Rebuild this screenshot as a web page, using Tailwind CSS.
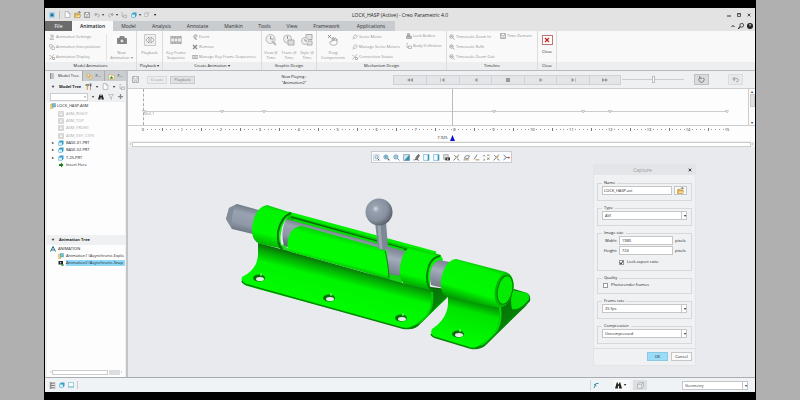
<!DOCTYPE html>
<html lang="en">

<head>
    <meta charset="utf-8">
    <title>LOCK_HASP (Active) - Creo Parametric 4.0</title>
    <script src="https://cdn.jsdelivr.net/npm/@tailwindcss/browser@4"></script>
</head>

<body class="bg-[#b0b0b0] font-['Open_Sans','Noto_Sans',sans-serif] text-[4px] leading-[6px] text-[#333]">
    <!-- icon set -->
    <svg class="hidden">
        <symbol id="i-cam" viewBox="0 0 12 12"><path d="M1 4h2l1-2h4l1 2h2v6H1z" fill="#8a8a8a" /><circle cx="6" cy="7" r="2.2" fill="#ddd" stroke="#666" /></symbol>
        <symbol id="i-person" viewBox="0 0 12 12"><path d="M2 2h6v2H4v2h5M3 11c0-4 6-4 6 0M2 8v3h8" fill="none" stroke="#aaa" stroke-width="1.3" /><circle cx="8" cy="5" r="1.5" fill="#bbb" /></symbol>
        <symbol id="i-interp" viewBox="0 0 12 12"><path d="M1 1h5v5H1zM6 6h5v5H6zM2 8l3 3M7 2l3 3" fill="none" stroke="#aaa" stroke-width="1.3" /></symbol>
        <symbol id="i-disp" viewBox="0 0 12 12"><path d="M1 11L10 1M1 2l3 3M7 7h4v4H7z" fill="none" stroke="#999" stroke-width="1.5" /></symbol>
        <symbol id="i-playback" viewBox="0 0 12 12"><path d="M.5.5h11v11H.5z" fill="#eee" stroke="#ccc" /><path d="M5 3v6L2 6zM7 3v6l3-3z" fill="#fff" stroke="#888" stroke-width=".7" /></symbol>
        <symbol id="i-film" viewBox="0 0 14 10"><path d="M0 0h14v10H0z" fill="#a4a4a4" /><path d="M1 3h3.5v4H1zM5.3 3h3.5v4H5.3zM9.6 3h3.5v4H9.600z" fill="#eee" /><path d="M1 1.4h12M1 8.6h12" stroke="#eee" stroke-dasharray="1 1" /></symbol>
        <symbol id="i-event" viewBox="0 0 12 12"><circle cx="7" cy="4" r="3" fill="none" stroke="#999" stroke-width="1.3" /><path d="M7 2v2h2M2 6h3v3h4M6 11h4" fill="none" stroke="#999" stroke-width="1.3" /></symbol>
        <symbol id="i-x" viewBox="0 0 12 12"><path d="M2 2l8 8M10 2l-8 8" stroke="currentColor" stroke-width="2.6" /></symbol>
        <symbol id="i-clock" viewBox="0 0 12 12"><circle cx="5.5" cy="5" r="4.5" fill="#eee" stroke="#bbb" /><path d="M5.5 2v3h3" fill="none" stroke="#999" /><path d="M7 7l4 4" stroke="#bbb" stroke-width="2" /></symbol>
        <symbol id="i-clock2" viewBox="0 0 12 12"><circle cx="4.5" cy="5" r="4" fill="#eee" stroke="#bbb" /><path d="M5 6h6v5H5z" fill="#ddd" stroke="#aaa" /><path d="M4.5 2v3" stroke="#999" /></symbol>
        <symbol id="i-clock3" viewBox="0 0 12 12"><path d="M5 .5h6v5H5zM6 7h5v4H6z" fill="#e4e4e4" stroke="#aaa" /><circle cx="4" cy="7" r="3.5" fill="#eee" stroke="#bbb" /><path d="M4 5v2h2" fill="none" stroke="#999" /></symbol>
        <symbol id="i-hand" viewBox="0 0 12 12"><path d="M4 11L2.5 8l1-.5L5 8V4h1v3-3.5h1V7l1-3h1v3l1-2v4L9 11z" fill="#fff" stroke="#999" stroke-width=".7" /><path d="M1 1l3 3M4 1L1 4" stroke="#777" stroke-width=".8" /></symbol>
        <symbol id="i-motor" viewBox="0 0 12 12"><path d="M3 8c-2-3 3-8 6-6s0 7-3 7zM1 11l4-4M6 3l3 3" fill="none" stroke="#aaa" stroke-width="1.3" /></symbol>
        <symbol id="i-body" viewBox="0 0 12 12"><path d="M3 1h4v5H3zM1 6h10v5H1z" fill="#bbb" stroke="#8a8a8a" /></symbol>
        <symbol id="i-def" viewBox="0 0 12 12"><path d="M1 1h3M2 3v6h3M5 6h6v5H5z" fill="none" stroke="#aaa" stroke-width="1.5" /></symbol>
        <symbol id="i-zoom" viewBox="0 0 12 12"><circle cx="5" cy="5" r="3.5" fill="#e9f4f8" stroke="currentColor" stroke-width="1.3" /><path d="M8 8l3 3M3 5h4" stroke="currentColor" stroke-width="1.5" /></symbol>
        <symbol id="i-zoomin" viewBox="0 0 12 12"><circle cx="5" cy="5" r="3.5" fill="#e9f4f8" stroke="currentColor" stroke-width="1.3" /><path d="M8 8l3 3" stroke="#555" stroke-width="1.8" /><path d="M3 5h4M5 3v4" stroke="currentColor" stroke-width="1.5" /></symbol>
        <symbol id="i-refit" viewBox="0 0 12 12"><path d="M1 1h9v10H1z" fill="#fff" stroke="#aab" stroke-width=".8" /><circle cx="6" cy="5.500" r="2.800" fill="#d8eef5" stroke="currentColor" /><path d="M8 8l3 3" stroke="#555" stroke-width="1.600" /></symbol>
        <symbol id="i-save" viewBox="0 0 12 12"><path d="M1 1h10v10H1z" fill="#eee" stroke="currentColor" stroke-width="1.3" /><path d="M3 1h6v4H3zM4 8h4v3H4z" fill="#fff" stroke="currentColor" /></symbol>
        <symbol id="i-folder" viewBox="0 0 12 12"><path d="M1 4h4l1 1h4v6H1z" fill="#e8b84c" stroke="#a87c26" stroke-width=".8" /><path d="M3 7h9l-2 4H1z" fill="#ffe49b" stroke="#a87c26" stroke-width=".7" /><path d="M6 3c1-2 3-2 4 0M9 0l2 3H8" fill="none" stroke="#555" /></symbol>
        <symbol id="i-layers" viewBox="0 0 12 12"><path d="M1 2l4-1 2 4-4 2zM5 6l4-1 2 4-4 2z" fill="#fbe6a8" stroke="#c8963a" stroke-width=".9" /></symbol>
        <symbol id="i-fav" viewBox="0 0 12 12"><path d="M1 3h4l1 1h5v7H1z" fill="#fff6d8" stroke="#c8a03a" stroke-width=".9" /><path d="M6 5l1 2 2 .3-1.500 1.200.5 2L6 9.400 4 10.500l.5-2L3 7.300 5 7z" fill="#2b8a5a" /></symbol>
        <symbol id="i-new" viewBox="0 0 12 12"><path d="M2 1h5l3 3v7H2z" fill="#fff" stroke="#888" stroke-width=".9" /><path d="M7 1v3h3" fill="none" stroke="#888" stroke-width=".8" /></symbol>
        <symbol id="i-undo" viewBox="0 0 12 12"><path d="M1 5l3-3v6zM4 5c8-3 9 5 3 5" fill="none" stroke="#888" stroke-width="1.2" /></symbol>
        <symbol id="i-redo" viewBox="0 0 12 12"><path d="M11 5L8 2v6zM8 5C0 2-1 10 5 10" fill="none" stroke="#888" stroke-width="1.2" /></symbol>
        <symbol id="i-plane" viewBox="0 0 12 12"><path d="M1 1h10v10H1z" fill="#e8e8e8" stroke="#bbb" /><path d="M3 4h6v5H3z" fill="#f8f8f8" stroke="#bbb" /></symbol>
        <symbol id="i-box" viewBox="0 0 12 12"><path d="M1 4l3-3h7v7l-3 3H1zM1 4h7v7M8 4l3-3" fill="#ececec" stroke="#999" /></symbol>
        <symbol id="i-part" viewBox="0 0 12 12"><path d="M1 4l3-3h7v7l-3 3H1z" fill="#3a9cc8" /><path d="M2 5h6v5H2z" fill="#c9f1fb" /></symbol>
        <symbol id="i-asm" viewBox="0 0 12 12"><path d="M1 2h5v9H1z" fill="#f0d070" stroke="#b8923c" stroke-width=".7" /><path d="M5 1h6v7H5z" fill="#6fc0dc" stroke="#2b7f9e" stroke-width=".7" /></symbol>
        <symbol id="i-tree" viewBox="0 0 12 12"><path d="M3 0v12M3 2h7M3 6h7M3 10h7" fill="none" stroke="#666" stroke-width="1.3" /></symbol>
        <symbol id="i-tools" viewBox="0 0 12 12"><path d="M1 2h6v3H1z" fill="#777" /><path d="M3 4h2v8H3z" fill="#d9a441" /><path d="M8 1h3v4l-1 1v6H9V6L8 5z" fill="#666" /></symbol>
        <symbol id="i-binoc" viewBox="0 0 12 12"><path d="M3 1h2v3h2V1h2l3 10H7V7H5v4H0z" fill="#222" /></symbol>
        <symbol id="i-funnel" viewBox="0 0 12 12"><path d="M1 1h10L7 6v5L5 9V6z" fill="none" stroke="#999" /></symbol>
        <symbol id="i-view" viewBox="0 0 12 12"><path d="M1 1h9v10H1z" fill="#f6fdff" stroke="#54a6c0" /><path d="M8 1h2.500v10H8z" fill="#2b98c0" /></symbol>
        <symbol id="i-view2" viewBox="0 0 12 12"><path d="M1 1h10v10H1z" fill="#cdecf4" stroke="#558" stroke-width=".8" /><path d="M11 1v10H2z" fill="#3b8fa9" /></symbol>
        <symbol id="i-screen" viewBox="0 0 12 12"><path d="M1 1h10v10H1z" fill="#f6fdff" stroke="#54a6c0" /><path d="M1 9h10" stroke="#54a6c0" /></symbol>
        <symbol id="i-shade" viewBox="0 0 12 12"><path d="M1 10c3 1 4-1 4-3s2-3 4-6l2 1c-1 4-3 5-4 7l3 2" fill="#888" stroke="#333" stroke-width="1.100" /></symbol>
        <symbol id="i-axis" viewBox="0 0 12 12"><path d="M1 11L10 1M2 2l3 3M7 8l4 3" fill="none" stroke="#555" stroke-width="1.3" /><circle cx="8" cy="5" r="1.500" fill="#d0a84c" /></symbol>
        <symbol id="i-line" viewBox="0 0 12 12"><path d="M2 9L7 1" stroke="#555" stroke-width="1.200" /><path d="M4 10h7" stroke="#a8823c" stroke-width="1.500" /></symbol>
        <symbol id="i-points" viewBox="0 0 12 12"><path d="M1 2l2 2M3 2L1 4M7 2h4M1 9l2 2M3 9l-2 2M7 6l4 4M7 10l4-4" stroke="#665a3a" stroke-width="1.200" /></symbol>
        <symbol id="i-datum" viewBox="0 0 12 12"><path d="M2 7l3-4h6L9 8zM1 10h6" fill="none" stroke="#666" stroke-width="1.2" /><path d="M7 9h3v2H7z" fill="#c9a35a" /></symbol>
        <symbol id="i-shot" viewBox="0 0 12 12"><path d="M1 1h8v8H1z" fill="#ddd" stroke="#888" /><path d="M4 6h8v5H4z" fill="#333" /><circle cx="8" cy="8.500" r="1.400" fill="#eee" /></symbol>
        <symbol id="i-snap" viewBox="0 0 12 12"><path d="M1 2h9v7H1z" fill="#222" /><circle cx="5" cy="5.500" r="1.500" fill="#ddd" /><path d="M7 8h4v4H7z" fill="#3a9a3a" /></symbol>
        <symbol id="i-spin" viewBox="0 0 12 12"><path d="M1 2l5 4-5 4" fill="none" stroke="#37789a" stroke-width="1.5" /><path d="M6 6h4" stroke="#c33" stroke-width="1.5" /><circle cx="10" cy="6" r="1.5" fill="#c33" /></symbol>
    </svg>

    <div class="mx-[5.5%] min-h-screen flex flex-col bg-black py-2 px-px">
        <div class="flex-1 flex flex-col bg-[#eff0f2]">
            <!-- title bar -->
            <header class="bg-[#e3e3e3]">
                <div class="grid grid-cols-[1fr_auto_1fr] items-center h-[13px] px-1">
                    <div class="flex items-center gap-[3px]">
                        <svg class="size-[6px]" viewBox="0 0 12 12"><path d="M0 0h12v12H0z" fill="#a9d3e6" /><path d="M3 3h6v6H3z" fill="#1f6f9c" /></svg>
                        <span class="w-px h-2 bg-[#bbb] mx-px"></span>
                        <button aria-label="New"><svg class="size-[7px]"><use href="#i-new" /></svg></button>
                        <button aria-label="Open"><svg class="size-[7px]"><use href="#i-folder" /></svg></button>
                        <button aria-label="Save" class="text-[#777]"><svg class="size-[6px]"><use href="#i-save" /></svg></button>
                        <button aria-label="Undo" class="flex items-center gap-[2px] ml-px"><svg class="size-[6px]"><use href="#i-undo" /></svg>▾</button>
                        <button aria-label="Redo" class="flex items-center gap-[2px] ml-px"><svg class="size-[6px]"><use href="#i-redo" /></svg>▾</button>
                        <button aria-label="Regenerate"><svg class="size-[6px]"><use href="#i-def" /></svg></button>
                        <button aria-label="Windows" class="flex items-center gap-[2px] ml-px"><svg class="size-[6px]"><use href="#i-part" /></svg>▾</button>
                        <button aria-label="Close window"><svg class="size-[5px]"><use href="#i-box" /></svg></button>
                        <button aria-label="Customize" class="ml-[2px] text-black">▾</button>
                    </div>
                    <h1 class="text-[5px] text-[#222]">LOCK_HASP (Active) - Creo Parametric 4.0</h1>
                    <div class="flex justify-end items-center gap-[6px] text-[#333]">
                        <button aria-label="Minimize"><svg class="size-1" viewBox="0 0 4 4"><path d="M0 3h4" stroke="#333" /></svg></button>
                        <button aria-label="Maximize"><svg class="size-1" viewBox="0 0 8 8"><path d="M1 1h6v6H1zM1 2h6" fill="none" stroke="#333" stroke-width="1.5" /></svg></button>
                        <button aria-label="Close"><svg class="size-1"><use href="#i-x" /></svg></button>
                    </div>
                </div>
                <div class="flex items-center h-[10px] text-[5px] text-[#333]">
                    <nav class="flex h-full bg-[#c9cccf] text-center">
                        <button class="w-[27px] bg-[#6b6b6b] text-white">File</button>
                        <button class="w-[41px] bg-[#f9f9fa] text-[#222] font-semibold">Animation</button>
                        <button class="w-[31px]">Model</button>
                        <button class="w-[35px]">Analysis</button>
                        <button class="w-[37px]">Annotate</button>
                        <button class="w-[35px]">Manikin</button>
                        <button class="w-[27px]">Tools</button>
                        <button class="w-[28px]">View</button>
                        <button class="w-[41px]">Framework</button>
                        <button class="w-[48px]">Applications</button>
                    </nav>
                    <div class="ml-auto flex items-center gap-[3px] pr-[2px] text-[#222]">
                        <svg class="size-1" viewBox="0 0 8 8"><path d="M1 6l3-3 3 3" fill="none" stroke="#222" stroke-width="2" /></svg>
                        <svg class="size-[6px]" viewBox="0 0 8 8"><circle cx="5" cy="3" r="2.5" fill="none" stroke="#222" /><path d="M3 5L0 8" stroke="#222" stroke-width="1.5" /></svg>
                        <button class="size-[6px] rounded-full bg-[#222] text-[4px] text-white font-bold">?</button>
                    </div>
                </div>
            </header>

            <!-- ribbon -->
            <div class="flex h-10 bg-[#f9f9fa] border-b border-[#b9bbbe] text-[#8f8f8f]">
                <section class="w-[92px] flex flex-col border-r border-[#dcdcdc]">
                    <div class="flex-1 flex items-center">
                        <div class="w-[62px] flex flex-col gap-1 pl-1 border-r border-[#e4e4e4] whitespace-nowrap">
                            <button class="flex items-center gap-px"><svg class="size-[6px]"><use href="#i-person" /></svg>Animation Settings</button>
                            <button class="flex items-center gap-px"><svg class="size-[6px]"><use href="#i-interp" /></svg>Animation Interpolation</button>
                            <button class="flex items-center gap-px"><svg class="size-[6px]"><use href="#i-disp" /></svg>Animation Display</button>
                        </div>
                        <button class="flex-1 flex flex-col items-center leading-[5px]"><svg class="size-3 mb-1"><use href="#i-cam" /></svg>New<br>Animation ▾</button>
                    </div>
                    <h2 class="h-2 leading-[8px] bg-[#eceef0] text-center text-[#222]">Model Animations</h2>
                </section>
                <section class="w-[26px] flex flex-col border-r border-[#dcdcdc]">
                    <button class="flex-1 flex flex-col items-center pt-[3px] leading-[5px]"><svg class="size-3 mb-1"><use href="#i-playback" /></svg>Playback</button>
                    <h2 class="h-2 leading-[8px] bg-[#eceef0] text-center text-[#222]">Playback ▾</h2>
                </section>
                <section class="w-[99px] flex flex-col border-r border-[#dcdcdc]">
                    <div class="flex-1 flex items-center">
                        <button class="w-[26px] flex flex-col items-center leading-[5px]"><svg class="w-3 h-2 mt-[2px] mb-[6px]"><use href="#i-film" /></svg>Key Frame<br>Sequence</button>
                        <div class="flex flex-col gap-1 pl-[3px] whitespace-nowrap">
                            <button class="flex items-center gap-px"><svg class="size-[6px]"><use href="#i-event" /></svg>Event</button>
                            <button class="flex items-center gap-px"><svg class="size-[6px] text-[#888]"><use href="#i-x" /></svg>Remove</button>
                            <button class="flex items-center gap-px"><svg class="w-[6px] h-1"><use href="#i-film" /></svg>Manage Key Frame Sequences</button>
                        </div>
                    </div>
                    <h2 class="h-2 leading-[8px] bg-[#eceef0] text-center text-[#222]">Create Animation ▾</h2>
                </section>
                <section class="w-[55px] flex flex-col border-r border-[#dcdcdc]">
                    <div class="flex-1 grid grid-cols-3 items-center leading-[5px]">
                        <button class="flex flex-col items-center"><svg class="size-3 mb-1"><use href="#i-clock" /></svg>View @<br>Time</button>
                        <button class="flex flex-col items-center"><svg class="size-3 mb-1"><use href="#i-clock2" /></svg>Trans @<br>Time</button>
                        <button class="flex flex-col items-center"><svg class="size-3 mb-1"><use href="#i-clock3" /></svg>Style @<br>Time</button>
                    </div>
                    <h2 class="h-2 leading-[8px] bg-[#eceef0] text-center text-[#222]">Graphic Design</h2>
                </section>
                <section class="w-[130px] flex flex-col border-r border-[#dcdcdc]">
                    <div class="flex-1 flex items-center whitespace-nowrap">
                        <button class="w-[32px] flex flex-col items-center leading-[5px]"><svg class="size-3 mb-1"><use href="#i-hand" /></svg>Drag<br>Components</button>
                        <div class="w-[54px] flex flex-col gap-1 pl-[3px]">
                            <button class="flex items-center gap-px"><svg class="size-[6px]"><use href="#i-motor" /></svg>Servo Motor</button>
                            <button class="flex items-center gap-px"><svg class="size-[6px]"><use href="#i-motor" /></svg>Manage Servo Motors</button>
                            <button class="flex items-center gap-px"><svg class="size-[6px]"><use href="#i-disp" /></svg>Connection Status</button>
                        </div>
                        <div class="self-start pt-[2px] flex flex-col gap-1 pl-[3px]">
                            <button class="flex items-center gap-px"><svg class="size-[6px]"><use href="#i-body" /></svg>Lock Bodies</button>
                            <button class="flex items-center gap-px"><svg class="size-[6px]"><use href="#i-def" /></svg>Body Definition</button>
                        </div>
                    </div>
                    <h2 class="h-2 leading-[8px] bg-[#eceef0] text-center text-[#222]">Mechanism Design</h2>
                </section>
                <section class="w-[91px] flex flex-col border-r border-[#dcdcdc]">
                    <div class="flex-1 flex items-center whitespace-nowrap">
                        <div class="w-[51px] flex flex-col gap-1 pl-[2px]">
                            <button class="flex items-center gap-px"><svg class="size-[6px]"><use href="#i-zoom" /></svg>Timescale Zoom In</button>
                            <button class="flex items-center gap-px"><svg class="size-[6px]"><use href="#i-zoom" /></svg>Timescale Refit</button>
                            <button class="flex items-center gap-px"><svg class="size-[6px]"><use href="#i-zoom" /></svg>Timescale Zoom Out</button>
                        </div>
                        <button class="self-start pt-[2px] pl-[2px] flex items-center gap-px"><svg class="size-[6px]"><use href="#i-save" /></svg>Time Domain</button>
                    </div>
                    <h2 class="h-2 leading-[8px] bg-[#eceef0] text-center text-[#222]">Timeline</h2>
                </section>
                <section class="w-[19px] flex flex-col border-r border-[#dcdcdc] text-[#222]">
                    <button class="flex-1 flex flex-col items-center pt-1 leading-[5px]"><span class="w-[11px] h-[10px] mb-1 flex items-center justify-center border border-[#b77] bg-white text-[#c22]"><svg class="size-[6px]"><use href="#i-x" /></svg></span>Close</button>
                    <h2 class="h-2 leading-[8px] bg-[#eceef0] text-center">Close</h2>
                </section>
                <div class="flex-1 flex flex-col justify-end"><div class="h-2 bg-[#eceef0]"></div></div>
            </div>

            <div class="flex-1 flex">
                <!-- left panel -->
                <aside class="w-[83px] shrink-0 flex flex-col border-r-2 border-[#c2c4c7] pl-[2px]">
                    <div class="flex h-[10px] text-[#222]">
                        <button class="w-[35px] flex items-center gap-[3px] pl-[2px] whitespace-nowrap"><svg class="size-[6px]"><use href="#i-tree" /></svg>Model Tree</button>
                        <button class="flex-1 flex items-center justify-center gap-[2px] bg-[#c9cdd0] border-l border-[#aaa]"><svg class="size-[7px]"><use href="#i-layers" /></svg>F...</button>
                        <button class="flex-1 flex items-center justify-center gap-[2px] bg-[#c9cdd0] border-l border-[#aaa]"><svg class="size-[7px]"><use href="#i-fav" /></svg>F...</button>
                    </div>
                    <div class="h-[11px] flex items-center gap-[4px] pl-1 text-[#222] whitespace-nowrap">
                        <span>▼</span><h2 class="font-bold">Model Tree</h2>
                        <svg class="size-[7px]"><use href="#i-tools" /></svg>▾
                        <svg class="size-[7px]"><use href="#i-new" /></svg>▾
                        <svg class="size-[6px]"><use href="#i-def" /></svg>
                    </div>
                    <div class="h-[10px] flex items-center gap-1 pl-[3px] pb-px text-[#333]">
                        <label class="w-[38px] h-2 flex items-center bg-white border border-[#ccc] pr-px"><input aria-label="Search tree" class="w-0 flex-1">×</label>
                        ▾
                        <svg class="size-[6px]"><use href="#i-binoc" /></svg>
                        <svg class="size-[6px]"><use href="#i-funnel" /></svg>
                        <svg class="size-[5px]" viewBox="0 0 6 6"><path d="M3 0v6M0 3h6" stroke="#888" stroke-width="1.5" /></svg>
                    </div>
                    <ul class="mr-px h-[133px] bg-[#fdfdfe] text-[#222]">
                        <li class="flex items-center gap-px pl-[3px] h-[8px]"><svg class="size-[6px]"><use href="#i-asm" /></svg>LOCK_HASP.ASM</li>
                        <li class="flex items-center gap-[2px] pl-[11px] h-[7px] text-[#aaa]"><svg class="size-[6px]"><use href="#i-plane" /></svg>ASM_RIGHT</li>
                        <li class="flex items-center gap-[2px] pl-[11px] h-[7px] text-[#aaa]"><svg class="size-[6px]"><use href="#i-plane" /></svg>ASM_TOP</li>
                        <li class="flex items-center gap-[2px] pl-[11px] h-[8px] text-[#aaa]"><svg class="size-[6px]"><use href="#i-plane" /></svg>ASM_FRONT</li>
                        <li class="flex items-center gap-[2px] pl-[11px] h-[7px] text-[#aaa]"><svg class="size-[6px]"><use href="#i-plane" /></svg>ASM_DEF_CSYS</li>
                        <li class="flex items-center gap-[2px] pl-[5px] h-[7px]"><span class="w-1">▸</span><svg class="size-[6px]"><use href="#i-part" /></svg>BASE-01.PRT</li>
                        <li class="flex items-center gap-[2px] pl-[5px] h-[8px]"><span class="w-1">▸</span><svg class="size-[6px]"><use href="#i-part" /></svg>BASE-02.PRT</li>
                        <li class="flex items-center gap-[2px] pl-[5px] h-[7px]"><span class="w-1">▸</span><svg class="size-[6px]"><use href="#i-part" /></svg>T-25.PRT</li>
                        <li class="flex items-center gap-[2px] pl-[11px] h-[7px]"><svg class="size-[6px]" viewBox="0 0 12 12"><path d="M2 4h4V1l5 5-5 5V8H2z" fill="#1f7a1f" /></svg>Insert Here</li>
                    </ul>
                    <div class="h-[10px] flex items-center gap-[4px] pl-1 text-[#222]"><span>▼</span><h2 class="font-bold">Animation Tree</h2></div>
                    <div class="mr-px flex-1 flex flex-col bg-[#fdfdfe] text-[#222] whitespace-nowrap">
                        <div class="flex items-center gap-[2px] pl-[3px] h-[7px]"><svg class="size-[6px]" viewBox="0 0 12 12"><path d="M1 11L6 1l5 10M3 8h6" fill="none" stroke="#247080" stroke-width="2" /></svg>ANIMATION</div>
                        <div class="flex items-center gap-[2px] pl-[11px] h-[7px] overflow-hidden"><svg class="size-[6px] shrink-0"><use href="#i-asm" /></svg>Animation1 (Asynchronic-Explo</div>
                        <div class="flex items-center gap-[2px] pl-[11px] h-[8px] overflow-hidden"><svg class="size-[6px] shrink-0"><use href="#i-snap" /></svg><span class="flex-1 bg-[#8fd8f7]">Animation2 (Asynchronic-Snap</span></div>
                        <div class="mt-auto mb-[2px] h-[6px] mx-[3px] flex items-center gap-px">‹<span class="w-[56px] h-[5px] bg-white border border-[#ccc]"></span><span class="flex-1 h-[5px] bg-[#dcdddf]"></span>›</div>
                    </div>
                </aside>

                <main class="flex-1 min-w-0 flex flex-col">
                    <!-- playback controls -->
                    <div class="h-[17px] flex items-center px-1 text-[#777]">
                        <button aria-label="Save" class="size-2 text-[#999]"><svg class="size-[7px]"><use href="#i-save" /></svg></button>
                        <button class="ml-[7px] w-[20px] h-2 leading-[6px] border border-[#d8d9db] bg-[#ebecee] text-[#999]">Create</button>
                        <button class="ml-[3px] w-[25px] h-2 leading-[6px] border border-[#c9cacc] bg-[#dfe1e3]">Playback</button>
                        <p class="ml-[82px] w-[34px] text-center leading-[6px] text-[#222]">Now Playing :<br>"Animation2"</p>
                        <div class="ml-[82px] flex h-[10px] bg-[#e3e5e8] border border-[#d0d2d4]">
                            <button aria-label="Fast rewind" class="w-[32px] flex items-center justify-center"><svg class="w-[6px] h-1" viewBox="0 0 12 8"><path d="M6 0v8L0 4zM12 0v8L6 4z" fill="#999" /></svg></button>
                            <button aria-label="To start" class="w-[33px] flex items-center justify-center border-l border-[#d0d2d4]"><svg class="w-[6px] h-1" viewBox="0 0 12 8"><path d="M9 0v8L3 4zM1 0h1v8H1z" fill="#999" /></svg></button>
                            <button aria-label="Step back" class="w-[32px] flex items-center justify-center border-l border-[#d0d2d4]"><svg class="w-[6px] h-1" viewBox="0 0 12 8"><path d="M9 0v8L3 4z" fill="#999" /></svg></button>
                            <button aria-label="Stop" class="w-[33px] flex items-center justify-center border-l border-[#d0d2d4]"><span class="size-1 bg-[#999]"></span></button>
                            <button aria-label="Play" class="w-[32px] flex items-center justify-center border-l border-[#d0d2d4]"><svg class="w-[6px] h-1" viewBox="0 0 12 8"><path d="M3 0v8l6-4z" fill="#999" /></svg></button>
                            <button aria-label="To end" class="w-[33px] flex items-center justify-center border-l border-[#d0d2d4]"><svg class="w-[6px] h-1" viewBox="0 0 12 8"><path d="M3 0v8l6-4zM10 0h1v8h-1z" fill="#999" /></svg></button>
                            <button aria-label="Fast forward" class="w-[31px] flex items-center justify-center border-l border-[#d0d2d4]"><svg class="w-[6px] h-1" viewBox="0 0 12 8"><path d="M0 0v8l6-4zM6 0v8l6-4z" fill="#999" /></svg></button>
                        </div>
                        <input type="range" aria-label="Speed" class="appearance-none flex-1 min-w-0 h-px bg-[#ccc] ml-px mr-[10px] [&::-webkit-slider-thumb]:appearance-none [&::-webkit-slider-thumb]:w-[3px] [&::-webkit-slider-thumb]:h-[7px] [&::-webkit-slider-thumb]:bg-white [&::-webkit-slider-thumb]:border [&::-webkit-slider-thumb]:border-[#bbb]">
                        <button aria-label="Repeat" class="w-[15px] h-[11px] flex items-center justify-center border border-[#bfc1c3] bg-[#d9dbdd]"><svg class="size-[7px]" viewBox="0 0 12 12"><path d="M3 3a4.500 4.500 0 1 0 6 0M3 0v4h4" fill="none" stroke="#666" stroke-width="1.3" /></svg></button>
                        <button aria-label="Reverse" class="ml-[19px] mr-2 w-[15px] h-[11px] flex items-center justify-center border border-[#ddd] bg-[#e7e8ea]"><svg class="size-[7px]"><use href="#i-undo" /></svg></button>
                    </div>

                    <!-- timeline -->
                    <div class="flex h-[38px] border-y border-[#ccc] bg-[#fdfdfe]">
                        <div class="flex-1 pl-[15px] pr-[21px]">
                            <div id="track" class="relative h-full border-l border-dashed border-[#aaa]">
                                <div class="absolute inset-x-0 top-[22px] h-px bg-[#ccc]"></div>
                                <span class="absolute left-0 top-[22px] text-[#888]">Sh2.1</span>
                            </div>
                        </div>
                        <div class="w-[7px] flex flex-col items-center border-l border-[#ccc] leading-[5px]">▴<span class="w-[5px] flex-1 bg-[#dfe0e2] border border-[#ccc]"></span><span class="h-[13px]"></span>▾</div>
                    </div>
                    <div class="h-[15px] bg-[#fdfdfe] pl-[15px] pr-[28px]"><div id="ruler" class="relative h-full text-[#222]"></div></div>
                    <div class="h-[6px] flex items-center justify-between px-[2px] bg-[#f0f1f2]">‹<span class="flex-1 h-[5px] mx-px bg-white border border-[#ccc]"></span>›</div>

                    <!-- graphics area -->
                    <div class="relative flex-1 min-h-[229px] bg-[#e8eaee]">
                        <div class="absolute left-[243px] top-1 h-[12px] flex items-center gap-[3px] px-px bg-[#fbfcfd] border border-[#c8cacc] text-[#3b87a5]">
                            <button aria-label="Refit"><svg class="size-[7px]"><use href="#i-refit" /></svg></button>
                            <button aria-label="Zoom in"><svg class="size-[7px]"><use href="#i-zoomin" /></svg></button>
                            <button aria-label="Zoom out"><svg class="size-[7px]"><use href="#i-zoom" /></svg></button>
                            <button aria-label="Repaint"><svg class="size-[7px]"><use href="#i-view2" /></svg></button>
                            <button aria-label="Rendering"><svg class="size-[7px]"><use href="#i-shade" /></svg></button>
                            <button aria-label="Display style"><svg class="size-[7px]"><use href="#i-view" /></svg></button>
                            <button aria-label="Saved orientations"><svg class="size-[7px]"><use href="#i-view" /></svg></button>
                            <button aria-label="View manager"><svg class="size-[7px]"><use href="#i-shot" /></svg></button>
                            <button aria-label="Axis display"><svg class="size-[7px]"><use href="#i-axis" /></svg></button>
                            <button aria-label="Plane display"><svg class="size-[7px]"><use href="#i-datum" /></svg></button>
                            <button aria-label="Line display"><svg class="size-[7px]"><use href="#i-line" /></svg></button>
                            <button aria-label="Point display"><svg class="size-[7px]"><use href="#i-points" /></svg></button>
                            <button aria-label="Csys display"><svg class="size-[7px]"><use href="#i-axis" /></svg></button>
                            <button aria-label="Spin center"><svg class="size-[7px]"><use href="#i-spin" /></svg></button>
                        </div>

                        <!-- lock hasp model -->
                        <svg class="absolute left-[92px] top-[43px] w-[320px] h-[170px]" viewBox="220 190 320 170">
                            <defs>
                                <linearGradient id="steel" gradientUnits="userSpaceOnUse" x1="316" y1="224" x2="309" y2="250"><stop offset="0" stop-color="#6c7683" /><stop offset=".3" stop-color="#9aa4b2" /><stop offset=".7" stop-color="#8d97a5" /><stop offset="1" stop-color="#606975" /></linearGradient>
                                <linearGradient id="rod" gradientUnits="userSpaceOnUse" x1="248" y1="206" x2="242" y2="232"><stop offset="0" stop-color="#6f7884" /><stop offset=".3" stop-color="#98a2b0" /><stop offset=".7" stop-color="#8f99a7" /><stop offset="1" stop-color="#6c7581" /></linearGradient>
                                <linearGradient id="rod2" gradientUnits="userSpaceOnUse" x1="442" y1="259" x2="435" y2="287"><stop offset="0" stop-color="#747d8a" /><stop offset=".4" stop-color="#a3acba" /><stop offset="1" stop-color="#717a87" /></linearGradient>
                                <linearGradient id="tube" gradientUnits="userSpaceOnUse" x1="276" y1="205" x2="265" y2="247"><stop offset="0" stop-color="#05b805" /><stop offset=".14" stop-color="#03f403" /><stop offset=".7" stop-color="#00fa00" /><stop offset="1" stop-color="#04a404" /></linearGradient>
                                <linearGradient id="tube2" gradientUnits="userSpaceOnUse" x1="426" y1="249" x2="416" y2="289"><stop offset="0" stop-color="#05b805" /><stop offset=".12" stop-color="#03f403" /><stop offset=".7" stop-color="#00fa00" /><stop offset="1" stop-color="#049404" /></linearGradient>
                                <linearGradient id="tube3" gradientUnits="userSpaceOnUse" x1="482" y1="264" x2="470" y2="304"><stop offset="0" stop-color="#05b805" /><stop offset=".12" stop-color="#03f403" /><stop offset=".7" stop-color="#00fa00" /><stop offset="1" stop-color="#048e04" /></linearGradient>
                                <linearGradient id="sleeve" gradientUnits="userSpaceOnUse" x1="344" y1="238" x2="336" y2="269"><stop offset="0" stop-color="#08d808" /><stop offset=".15" stop-color="#00fa00" /><stop offset=".75" stop-color="#00fa00" /><stop offset="1" stop-color="#069006" /></linearGradient>
                                <linearGradient id="plate" gradientUnits="userSpaceOnUse" x1="342" y1="263" x2="331" y2="306"><stop offset="0" stop-color="#0a5c0a" /><stop offset=".18" stop-color="#04a804" /><stop offset=".42" stop-color="#00f400" /><stop offset="1" stop-color="#00fc00" /></linearGradient>
                                <linearGradient id="plate2" gradientUnits="userSpaceOnUse" x1="473" y1="298" x2="462" y2="342"><stop offset="0" stop-color="#057005" /><stop offset=".3" stop-color="#00e400" /><stop offset="1" stop-color="#00fc00" /></linearGradient>
                                <linearGradient id="side" x1="0" y1="0" x2="1" y2="1"><stop offset="0" stop-color="#045c04" /><stop offset="1" stop-color="#07a007" /></linearGradient>
                                <radialGradient id="ball" cx=".38" cy=".38" r=".68"><stop offset="0" stop-color="#d4dce6" /><stop offset=".18" stop-color="#98a2b0" /><stop offset=".65" stop-color="#858f9d" /><stop offset="1" stop-color="#515963" /></radialGradient>
                            </defs>
                            <!-- bolt end -->
                            <path d="M237 204L262 211L257 235L232 229L226 219L229 208Z" fill="url(#rod)" />
                            <path d="M237 204L229 208L226 219L232 229Q230 214 237 204Z" fill="#838d9a" />
                            <!-- back rail -->
                            <path d="M286 212L441 255L442 272L388 280L286 245Z" fill="#04c004" />
                            <path d="M288 213L436 253" stroke="#03f003" stroke-width="3" />
                            <path d="M291 217L408 250" stroke="#066a06" stroke-width="1.5" />
                            <path d="M294 220L404 250" stroke="#04de04" stroke-width="2" />
                            <path d="M286 219L412 253L405 280L284 246Q280 232 286 219Z" fill="url(#steel)" />
                            <path d="M283 244L292 252L280 250Z" fill="#25d825" />
                            <path d="M387 248L413 254L404 276L389 274Z" fill="url(#rod2)" />
                            <path d="M389 274L402 276L402 285L389 281Z" fill="#15d415" />
                            <!-- main base plate -->
                            <path d="M258 243L281 249L388 279L402 283L446 289L447 298L418 326Q412 331 402 328L247 286Q240 283 242 277Q257 270 258 255Z" fill="url(#plate)" />
                            <path d="M432 291L446 288L446 298L418 326Q413 330 408 328Q426 322 431 307Q433 299 432 291Z" fill="url(#side)" />
                            <path d="M242 281Q243 284 248 285L402 328Q412 330 418 325" fill="none" stroke="#058505" stroke-width="1.5" />
                            <path d="M432 292Q435 314 418 323" fill="none" stroke="#06c806" stroke-width="2" />
                            <!-- sleeve -->
                            <path d="M302 226L384 249Q388 250 387 257L389 279L291 252Q286 249 288 240Q291 226 302 226Z" fill="url(#sleeve)" />
                            <path d="M385 251Q388 260 389 278" fill="none" stroke="#068806" />
                            <!-- first collar -->
                            <path d="M267 205L292 213Q282 221 281 233Q279 243 284 249L260 244Q252 241 252 230Q254 207 267 205Z" fill="url(#tube)" />
                            <path d="M291 213Q281 217 278 232Q277 245 282 249" fill="none" stroke="#057005" stroke-width="2" />
                            <!-- middle collar -->
                            <path d="M411 247L437 254Q443 256 443 261Q431 261 430 276L430 290L404 284Q399 279 400 267Q403 249 411 247Z" fill="url(#tube2)" />
                            <path d="M440 256Q428 258 427 277Q427 287 432 290" fill="none" stroke="#068006" stroke-width="2" />
                            <path d="M438 260L450 262L443 288L431 285Q427 268 438 260Z" fill="url(#rod2)" />
                            <!-- keeper plate -->
                            <path d="M500 295L514 289L527 293Q531 295 530 301L485 345Q479 350 471 348L436 338Q429 335 432 329Q447 319 448 304V297Z" fill="url(#plate2)" />
                            <path d="M499 307L512 299Q516 313 528 304L485 345Q480 349 474 348Q492 341 498 326Q501 316 499 307Z" fill="url(#side)" />
                            <path d="M512 290L527 293Q531 296 528 301Q519 311 512 309Q510 301 512 290Z" fill="#03e603" />
                            <path d="M500 307Q504 333 481 345" fill="none" stroke="#04d804" stroke-width="2" />
                            <path d="M431 334Q432 337 437 338L470 348Q480 350 486 344L529 301" fill="none" stroke="#058505" stroke-width="1.5" />
                            <!-- keeper tube -->
                            <path d="M456 259L506 272Q513 275 514 285Q513 303 499 308L446 297Q440 293 441 280Q445 260 456 259Z" fill="url(#tube3)" />
                            <ellipse cx="504" cy="290" rx="9" ry="17" transform="rotate(11 504 290)" fill="#07b807" />
                            <ellipse cx="505" cy="290" rx="7.5" ry="14.5" transform="rotate(11 505 290)" fill="#04ec04" stroke="#057805" />
                            <!-- screw holes -->
                            <g id="hole"><ellipse cx="259" cy="278" rx="6" ry="3.5" fill="#067006" /><ellipse cx="260" cy="279" rx="4" ry="2" fill="#e8eaee" /><path d="M261 273v3" stroke="#9dff9d" /></g>
                            <use href="#hole" x="70" y="20" />
                            <use href="#hole" x="142" y="40" />
                            <use href="#hole" x="199" y="56" />
                            <!-- handle -->
                            <path d="M375 222H386L388 248Q383 252 378 248Z" fill="#7d8795" />
                            <path d="M379 224L381 249" stroke="#9ba5b2" stroke-width="3" />
                            <circle cx="379" cy="212" r="13.5" fill="url(#ball)" />
                        </svg>

                        <!-- capture dialog -->
                        <form class="absolute right-[59px] top-[17px] w-[103px] bg-[#f0f1f3] border border-[#e2e4e7] text-[#222]">
                            <div class="h-[10px] flex items-center bg-[#e4e5e8] px-[3px]"><h2 class="flex-1 text-center text-[5px] text-[#999]">Capture</h2><button type="button" aria-label="Close"><svg class="size-1"><use href="#i-x" /></svg></button></div>
                            <div class="px-[3px] pt-[5px] flex flex-col gap-1">
                                <fieldset class="h-[21px] px-1 border border-[#d6d8da]"><legend class="px-[2px]">Name</legend>
                                    <div class="flex gap-[2px]"><input aria-label="File name" value="LOCK_HASP.avi" class="flex-1 min-w-0 h-[9px] px-px bg-white border border-[#c4c6c8]"><button type="button" aria-label="Browse" class="w-[13px] h-[9px] flex items-center justify-center bg-[#fafafa] border border-[#c4c6c8]"><svg class="size-[7px]"><use href="#i-folder" /></svg></button></div>
                                </fieldset>
                                <fieldset class="h-[21px] px-1 border border-[#d6d8da]"><legend class="px-[2px]">Type</legend>
                                    <div class="relative"><select aria-label="Type" class="appearance-none block w-full h-[9px] leading-[7px] px-[2px] bg-white border border-[#c4c6c8]"><option>AVI</option></select><span class="absolute right-0 inset-y-0 w-[6px] text-center leading-[9px] border-l border-[#c4c6c8] pointer-events-none">▾</span></div>
                                </fieldset>
                                <fieldset class="h-[41px] px-1 border border-[#d6d8da]"><legend class="px-[2px]">Image size</legend>
                                    <div class="grid grid-cols-[15px_1fr_12px] gap-x-[2px] gap-y-px items-center">
                                        <label for="w" class="text-right">Width:</label><input id="w" value="1980" class="min-w-0 h-[9px] px-[2px] bg-white border border-[#c4c6c8]"><span>pixels</span>
                                        <label for="h" class="text-right">Height:</label><input id="h" value="724" class="min-w-0 h-[9px] px-[2px] bg-white border border-[#c4c6c8]"><span>pixels</span>
                                    </div>
                                    <label class="mt-1 ml-[17px] flex items-center gap-[3px]"><span class="relative flex"><input type="checkbox" checked class="peer appearance-none size-[5px] bg-white border border-[#999]"><svg class="hidden peer-checked:block absolute inset-0 size-[5px] pointer-events-none" viewBox="0 0 10 10"><path d="M2 5l2 3 4-6" fill="none" stroke="#222" stroke-width="1.8" /></svg></span>Lock aspect ratio</label>
                                </fieldset>
                                <fieldset class="h-[19px] px-1 border border-[#d6d8da]"><legend class="px-[2px]">Quality</legend>
                                    <label class="flex items-center gap-[3px] pt-px pl-px"><input type="checkbox" class="appearance-none size-[5px] bg-white border border-[#999]">Photorender frames</label>
                                </fieldset>
                                <fieldset class="h-[21px] px-1 border border-[#d6d8da]"><legend class="px-[2px]">Frame rate</legend>
                                    <div class="relative"><select aria-label="Frame rate" class="appearance-none block w-full h-[9px] leading-[7px] px-[2px] bg-white border border-[#c4c6c8]"><option>25 fps</option></select><span class="absolute right-0 inset-y-0 w-[6px] text-center leading-[9px] border-l border-[#c4c6c8] pointer-events-none">▾</span></div>
                                </fieldset>
                                <fieldset class="h-[21px] px-1 border border-[#d6d8da]"><legend class="px-[2px]">Compression</legend>
                                    <div class="relative"><select aria-label="Compression" class="appearance-none block w-full h-[9px] leading-[7px] px-[2px] bg-white border border-[#c4c6c8]"><option>Uncompressed</option></select><span class="absolute right-0 inset-y-0 w-[6px] text-center leading-[9px] border-l border-[#c4c6c8] pointer-events-none">▾</span></div>
                                </fieldset>
                            </div>
                            <div class="mt-1 pt-[3px] pb-1 pr-[3px] flex justify-end gap-[3px] border-t border-[#dcdee0]">
                                <button type="button" class="w-[21px] h-[9px] leading-[7px] bg-[#9bdcf8] border border-[#8cc8e2]">OK</button>
                                <button type="button" class="w-[21px] h-[9px] leading-[7px] bg-[#fafafa] border border-[#c4c6c8]">Cancel</button>
                            </div>
                        </form>
                    </div>
                </main>
            </div>

            <!-- status bar -->
            <footer class="h-[15px] flex items-center gap-[3px] px-1 border-t border-[#aaacaf] bg-[#f0f3f5]">
                <svg class="size-[7px] bg-[#ddd]"><use href="#i-tree" /></svg>
                <svg class="size-[6px]"><use href="#i-part" /></svg>
                <svg class="size-[6px]"><use href="#i-screen" /></svg>
                <span class="w-px h-2 bg-[#ccc]"></span>
                <div class="ml-auto h-[11px] w-[21px] pl-[2px] flex items-center border-l border-[#d4d6d8]"><svg class="size-[6px]" viewBox="0 0 12 12"><path d="M2 12L6 3l5 0M2 4l5 4" fill="none" stroke="#3492b0" stroke-width="2" /></svg></div>
                <button aria-label="Find" class="w-[16px] h-[10px] flex items-center gap-[2px] pl-px bg-[#fafafa] text-black"><svg class="size-[7px]"><use href="#i-binoc" /></svg>▾</button>
                <button aria-label="Selection box" class="w-[14px] h-[10px] flex items-center justify-center bg-[#dcdfe1]"><svg class="size-[7px]"><use href="#i-box" /></svg></button>
                <div class="relative ml-[32px] mr-[3px] w-[66px]"><select aria-label="Filter" class="appearance-none block w-full h-[9px] leading-[7px] px-[2px] bg-white border border-[#c4c6c8]"><option>Geometry</option></select><span class="absolute right-0 inset-y-0 w-[6px] text-center leading-[9px] border-l border-[#c4c6c8] pointer-events-none">▾</span></div>
            </footer>
        </div>
    </div>

    <script>
        const total = 15
        const current = 7.925
        const keys = [0, 2, 3.08, 9, 11.3, 12, 15]
        const track = document.getElementById('track')
        const ruler = document.getElementById('ruler')
        const at = (t) => `left:${t / total * 100}%`

        keys.forEach(k => {
            track.innerHTML += `<svg style="${at(k)}" class="absolute top-[21px] -ml-[2px] size-1" viewBox="0 0 8 8"><path d="M1 1h6L4 6z" fill="#fff" stroke="#999" /></svg>`
        })
        track.innerHTML += `<div style="${at(current)}" class="absolute inset-y-0 border-l border-[#bbb]"></div>`

        for (let i = 0; i <= total * 10; i++) {
            if (i % 10 === 0) {
                ruler.innerHTML += `<span style="${at(i / 10)}" class="absolute top-px -translate-x-1/2">${i / 10}</span>`
            } else if (i % 5 === 0) {
                ruler.innerHTML += `<span style="${at(i / 10)}" class="absolute top-[2px] w-px h-[3px] bg-[#777]"></span>`
            } else {
                ruler.innerHTML += `<span style="${at(i / 10)}" class="absolute top-[3px] size-px bg-[#999]"></span>`
            }
        }
        ruler.innerHTML += `<span style="${at(current)}" class="absolute top-[9px] -translate-x-full pr-1">7.925</span>`
        ruler.innerHTML += `<svg style="${at(current)}" class="absolute top-[9px] -ml-[2px] w-[5px] h-[6px]" viewBox="0 0 5 6"><path d="M2.5 0L5 6H0z" fill="#1010d0" /></svg>`
    </script>
</body>

</html>
